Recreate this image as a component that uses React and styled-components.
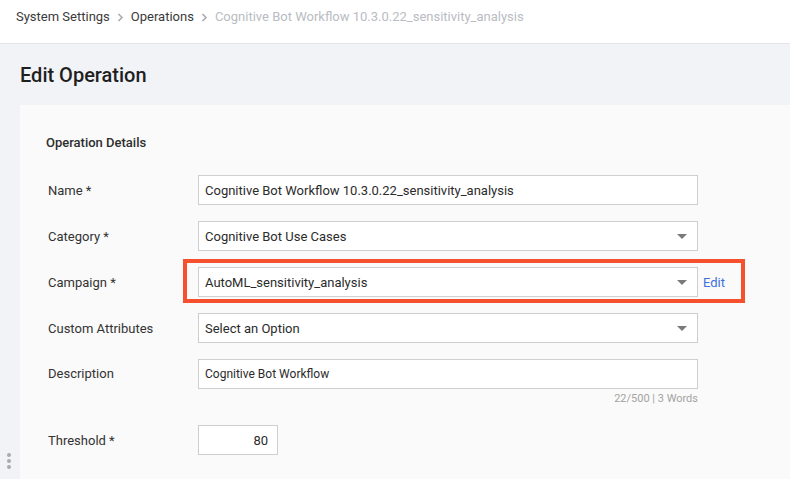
import React from 'react';
import styled, { createGlobalStyle } from 'styled-components';

const GlobalStyle = createGlobalStyle`
  html, body {
    margin: 0;
    padding: 0;
    overflow: hidden;
    background: #f2f3f7;
    font-family: Roboto, "Liberation Sans", Arial, sans-serif;
  }
`;

const Page = styled.div`
  display: flex;
  flex-direction: column;
  height: 479px;
`;

const TopBar = styled.div`
  height: 44px;
  box-sizing: border-box;
  padding: 9px 16px 0;
  background: #ffffff;
  border-bottom: 1px solid #e4e5e8;
  display: flex;
  align-items: flex-start;
`;

const Crumbs = styled.nav`
  display: flex;
  align-items: center;
  gap: 7px;
  font-size: 13px;
  line-height: 16px;
`;

const Crumb = styled.span`
  color: ${(p) => (p.$current ? '#b9bcc2' : '#3a3a3a')};
`;

const Sep = () => (
  <svg width="7" height="9" viewBox="0 0 7 9">
    <polyline points="1.5,1 5,4.5 1.5,8" fill="none" stroke="#a9abb0" strokeWidth="1.6" />
  </svg>
);

const Body = styled.main`
  flex: 1;
  display: flex;
  flex-direction: column;
  padding-left: 20px;
  min-height: 0;
`;

const Title = styled.h1`
  margin: 19px 0 0;
  height: 42px;
  font-size: 20px;
  line-height: 24px;
  font-weight: 500;
  color: #1f1f1f;
`;

const Card = styled.section`
  flex: 1;
  background: #fafafa;
  padding: 30px 0 0 26px;
`;

const CardTitle = styled.h2`
  margin: 0 0 24px;
  font-size: 13px;
  line-height: 16px;
  font-weight: 500;
  color: #2e2e2e;
`;

const Form = styled.div`
  display: flex;
  flex-direction: column;
  padding-left: 2px;
`;

const Row = styled.div`
  display: grid;
  grid-template-columns: 150px auto;
  align-items: center;
  margin-bottom: ${(p) => p.$gap ?? 16}px;
`;

const Label = styled.label`
  font-size: 13px;
  color: #333;
  align-self: ${(p) => (p.$top ? 'start' : 'center')};
  margin-top: ${(p) => (p.$top ? 7 : 0)}px;
`;

const Control = styled.div`
  position: relative;
  display: flex;
  align-items: center;
  gap: 5px;

  ${(p) =>
    p.$highlight &&
    `
    &::after {
      content: '';
      position: absolute;
      left: -15px;
      top: -8px;
      width: 562px;
      height: 44px;
      box-sizing: border-box;
      border: 4px solid #f5512f;
      pointer-events: none;
    }
  `}
`;

const Field = styled.div`
  width: ${(p) => p.$width ?? 500}px;
  height: 30px;
  box-sizing: border-box;
  background: #ffffff;
  border: 1px solid #cfcfcf;
  display: flex;
  align-items: center;
  justify-content: ${(p) => (p.$right ? 'flex-end' : 'space-between')};
  padding: 0 ${(p) => (p.$right ? 9 : 10)}px 0 6px;
  font-size: ${(p) => p.$size ?? 13}px;
  color: #2b2b2b;
`;

const Caret = styled.span`
  width: 0;
  height: 0;
  border-left: 5px solid transparent;
  border-right: 5px solid transparent;
  border-top: 5px solid #7a7a7a;
`;

const EditLink = styled.a`
  font-size: 13px;
  color: #3f6fdc;
  text-decoration: none;
  cursor: pointer;
`;

const Counter = styled.div`
  width: 500px;
  text-align: right;
  font-size: 11px;
  line-height: 13px;
  color: #a3a3a3;
  margin-top: 3px;
`;

const Stack = styled.div`
  display: flex;
  flex-direction: column;
`;

const Handle = styled.div`
  position: absolute;
  left: 7px;
  top: 453px;
  display: flex;
  flex-direction: column;
  gap: 2px;

  span {
    width: 4px;
    height: 4px;
    border-radius: 50%;
    background: #a9abaf;
  }
`;

const Select = ({ value }) => (
  <Field>
    <span>{value}</span>
    <Caret />
  </Field>
);

export default function App() {
  return (
    <Page>
      <GlobalStyle />
      <TopBar>
        <Crumbs>
          <Crumb>System Settings</Crumb>
          <Sep />
          <Crumb>Operations</Crumb>
          <Sep />
          <Crumb $current>Cognitive Bot Workflow 10.3.0.22_sensitivity_analysis</Crumb>
        </Crumbs>
      </TopBar>
      <Body>
        <Title>Edit Operation</Title>
        <Card>
          <CardTitle>Operation Details</CardTitle>
          <Form>
            <Row>
              <Label>Name *</Label>
              <Control>
                <Field>Cognitive Bot Workflow 10.3.0.22_sensitivity_analysis</Field>
              </Control>
            </Row>
            <Row>
              <Label>Category *</Label>
              <Control>
                <Select value="Cognitive Bot Use Cases" />
              </Control>
            </Row>
            <Row>
              <Label>Campaign *</Label>
              <Control $highlight>
                <Select value="AutoML_sensitivity_analysis" />
                <EditLink>Edit</EditLink>
              </Control>
            </Row>
            <Row>
              <Label>Custom Attributes</Label>
              <Control>
                <Select value="Select an Option" />
              </Control>
            </Row>
            <Row $gap={20}>
              <Label $top>Description</Label>
              <Stack>
                <Field $size={12}>Cognitive Bot Workflow</Field>
                <Counter>22/500 | 3 Words</Counter>
              </Stack>
            </Row>
            <Row>
              <Label>Threshold *</Label>
              <Control>
                <Field $width={80} $right>80</Field>
              </Control>
            </Row>
          </Form>
        </Card>
      </Body>
      <Handle>
        <span />
        <span />
        <span />
      </Handle>
    </Page>
  );
}
